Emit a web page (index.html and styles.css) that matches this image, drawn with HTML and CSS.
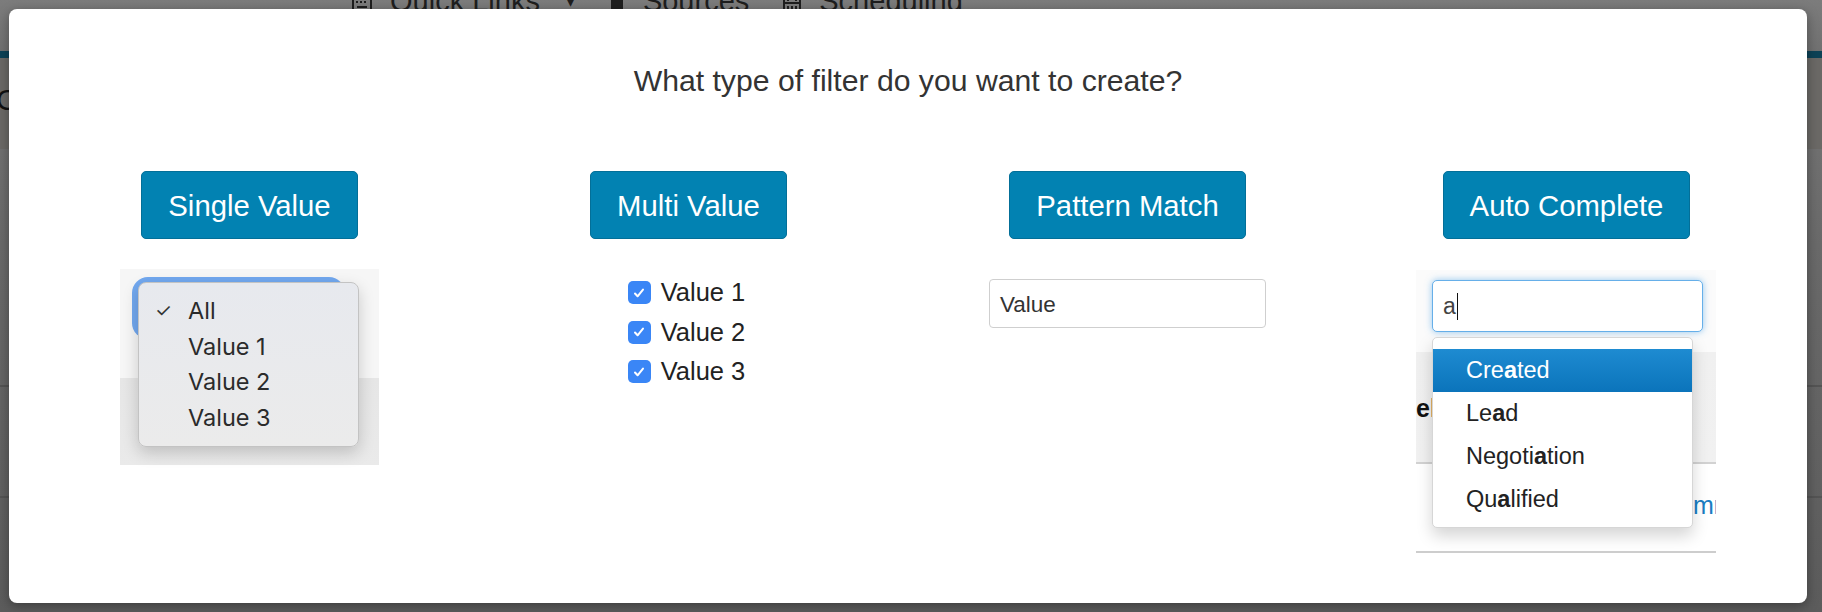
FILE: index.html
```html
<!DOCTYPE html>
<html>
<head>
<meta charset="utf-8">
<title>Filter type</title>
<link rel="stylesheet" href="styles.css">
</head>
<body>
<div class="page">
  <nav class="topnav">
    <span class="nav-item"><svg class="nav-ico" width="20" height="16" viewBox="0 0 20 16"><rect x="1" y="2" width="18" height="12" rx="1" fill="none" stroke="#1e1e1e" stroke-width="2"/><rect x="4" y="5" width="2" height="2" fill="#1e1e1e"/><rect x="8" y="5" width="2" height="2" fill="#1e1e1e"/><rect x="12" y="5" width="2" height="2" fill="#1e1e1e"/><rect x="5" y="10" width="10" height="2" fill="#1e1e1e"/></svg>Quick Links <span class="caret">▾</span></span>
    <span class="nav-item"><svg class="nav-ico" width="16" height="18" viewBox="0 0 16 18"><path d="M2 1h12v16l-6-4-6 4z" fill="#1e1e1e"/></svg>Sources</span>
    <span class="nav-item"><svg class="nav-ico" width="18" height="18" viewBox="0 0 18 18"><rect x="1" y="3" width="16" height="14" fill="none" stroke="#1e1e1e" stroke-width="2"/><path d="M1 7h16M5 1v4M13 1v4M5 10v5M9 10v5M13 10v5" stroke="#1e1e1e" stroke-width="2"/></svg>Scheduling</span>
  </nav>
  <div class="teal-bar"></div>
  <div class="subhead"><span class="sub-letter">C</span></div>
  <div class="page-body">
    <div class="rule rule-a"></div>
    <div class="rule rule-b"></div>
  </div>
</div>

<div class="modal">
  <h2 class="modal-title">What type of filter do you want to create?</h2>
  <div class="options">
    <div class="option">
      <button class="btn">Single Value</button>
      <div class="native-shot">
        <div class="native-select"></div>
        <ul class="native-menu">
          <li><span class="tick">✓</span>All</li>
          <li>Value 1</li>
          <li>Value 2</li>
          <li>Value 3</li>
        </ul>
      </div>
    </div>
    <div class="option">
      <button class="btn">Multi Value</button>
      <ul class="checklist">
        <li><span class="cb"><svg width="14" height="14" viewBox="0 0 14 14"><path d="M3 7.5l2.6 2.8L11 3.6" fill="none" stroke="#fff" stroke-width="2" stroke-linecap="round" stroke-linejoin="round"/></svg></span>Value 1</li>
        <li><span class="cb"><svg width="14" height="14" viewBox="0 0 14 14"><path d="M3 7.5l2.6 2.8L11 3.6" fill="none" stroke="#fff" stroke-width="2" stroke-linecap="round" stroke-linejoin="round"/></svg></span>Value 2</li>
        <li><span class="cb"><svg width="14" height="14" viewBox="0 0 14 14"><path d="M3 7.5l2.6 2.8L11 3.6" fill="none" stroke="#fff" stroke-width="2" stroke-linecap="round" stroke-linejoin="round"/></svg></span>Value 3</li>
      </ul>
    </div>
    <div class="option">
      <button class="btn">Pattern Match</button>
      <div class="text-input">Value</div>
    </div>
    <div class="option">
      <button class="btn">Auto Complete</button>
      <div class="ac-shot">
        <div class="ac-band"><span class="ac-bg-bold">el</span></div>
        <div class="ac-white"><span class="ac-bg-link">mr</span></div>
        <div class="ac-input">a<span class="text-caret"></span></div>
        <ul class="ac-menu">
          <li class="active">Cre<b>a</b>ted</li>
          <li>Le<b>a</b>d</li>
          <li>Negoti<b>a</b>tion</li>
          <li>Qu<b>a</b>lified</li>
        </ul>
      </div>
    </div>
  </div>
</div>
</body>
</html>
```

FILE: styles.css
```css
html, body {
  margin: 0;
  padding: 0;
}
body {
  width: 1822px;
  height: 612px;
  overflow: hidden;
  position: relative;
  font-family: "Liberation Sans", Arial, sans-serif;
  background: linear-gradient(180deg, #7a7a7a 0%, #6a6a6a 40%, #5c5c5c 100%);
}

/* page behind the overlay */
.page {
  height: 612px;
}
.topnav {
  height: 51px;
  display: flex;
  gap: 34px;
  padding-left: 352px;
  font-size: 29px;
  line-height: 14px;
  color: #1e1e1e;
  background: linear-gradient(180deg, #7c7c7c, #717171);
}
.nav-item {
  display: flex;
  align-items: flex-start;
  gap: 18px;
  height: 14px;
  margin-top: -6px;
  white-space: nowrap;
}
.nav-ico {
  margin-top: 2px;
}
.caret {
  font-size: 18px;
  margin-left: 8px;
}
.teal-bar {
  height: 7px;
  background: #0d4256;
}
.subhead {
  height: 91px;
  background: #6b6966;
  position: relative;
}
.sub-letter {
  display: block;
  font-size: 30px;
  line-height: 30px;
  padding-top: 27px;
  margin-left: -4px;
  color: #111;
}
.page-body {
  height: 463px;
  display: flex;
  flex-direction: column;
}
.rule {
  height: 2px;
  background: #545454;
}
.rule-a {
  margin-top: 236px;
}
.rule-b {
  margin-top: 109px;
}

/* modal */
.modal {
  position: absolute;
  top: 9px;
  left: 9px;
  width: 1798px;
  height: 594px;
  background: #fff;
  border-radius: 8px;
  box-shadow: 0 3px 12px rgba(0, 0, 0, 0.35);
}
.modal-title {
  margin: 0;
  padding-top: 54px;
  height: 36px;
  line-height: 36px;
  text-align: center;
  font-size: 30.2px;
  font-weight: normal;
  color: #333;
}
.options {
  display: grid;
  grid-template-columns: repeat(4, 1fr);
  padding: 72px 21px 0;
}
.option {
  display: flex;
  flex-direction: column;
  align-items: center;
}
.btn {
  height: 68px;
  padding: 0 26px;
  border: 1px solid #036f98;
  border-radius: 5px;
  background: #0282b2;
  color: #fff;
  font-family: "Liberation Sans", Arial, sans-serif;
  font-size: 29.3px;
  line-height: 68px;
}

/* native select screenshot */
.native-shot {
  position: relative;
  margin-top: 30px;
  width: 259px;
  height: 196px;
  background: linear-gradient(180deg, #f6f6f6 0, #f6f6f6 109px, #e6e6e6 109px, #eaeaea 100%);
}
.native-select {
  position: absolute;
  left: 12px;
  top: 8px;
  width: 213px;
  height: 62px;
  border-radius: 16px;
  background: #72a8ef;
}
.native-menu {
  position: absolute;
  left: 18px;
  top: 13px;
  width: 219px;
  height: 153px;
  margin: 0;
  padding: 10px 0 0;
  list-style: none;
  background: linear-gradient(180deg, #e7e9ee, #ebebeb);
  border: 1px solid #c3c3c3;
  border-radius: 8px;
  box-shadow: 0 6px 16px rgba(0, 0, 0, 0.18);
  font-family: Inter, "Liberation Sans", sans-serif;
  font-size: 23.5px;
  color: #2b2b2b;
}
.native-menu li {
  position: relative;
  height: 35.5px;
  line-height: 35.5px;
  padding-left: 49px;
}
.tick {
  position: absolute;
  left: 16px;
  font-size: 19px;
  color: #333;
}

/* checkboxes */
.checklist {
  list-style: none;
  margin: 34px 0 0;
  padding: 0;
  font-size: 25.5px;
  color: #222;
}
.checklist li {
  display: flex;
  align-items: center;
  gap: 10px;
  height: 39.5px;
  padding-right: 4px;
}
.cb {
  width: 23px;
  height: 23px;
  border-radius: 5px;
  background: #3a86f6;
  display: flex;
  align-items: center;
  justify-content: center;
}

/* pattern input */
.text-input {
  margin-top: 40px;
  width: 265px;
  height: 47px;
  padding-left: 10px;
  border: 1px solid #cfcfcf;
  border-radius: 4px;
  font-size: 22.5px;
  line-height: 49px;
  color: #333;
}

/* autocomplete screenshot */
.ac-shot {
  position: relative;
  margin-top: 31px;
  margin-left: -1px;
  width: 300px;
  height: 292px;
  overflow: hidden;
  background: #fff;
}
.ac-band {
  position: absolute;
  left: 0;
  top: 0;
  width: 300px;
  height: 192px;
  background: linear-gradient(180deg, #fbfbfb 0, #fbfbfb 82px, #f0f0f0 82px, #f1f1f1 100%);
  border-bottom: 2px solid #d2d2d2;
}
.ac-bg-bold {
  position: absolute;
  left: 0;
  top: 124px;
  font-size: 25px;
  font-weight: bold;
  color: #111;
}
.ac-white {
  position: absolute;
  left: 0;
  top: 194px;
  width: 300px;
  height: 87px;
  border-bottom: 2px solid #cdcdcd;
}
.ac-bg-link {
  position: absolute;
  left: 277px;
  top: 27px;
  font-size: 25px;
  color: #1a7dc2;
}
.ac-input {
  position: absolute;
  left: 16px;
  top: 10px;
  width: 259px;
  height: 50px;
  padding-left: 10px;
  border: 1px solid #66afe9;
  border-radius: 5px;
  background: #fff;
  box-shadow: 0 0 7px rgba(102, 175, 233, 0.7);
  font-size: 23px;
  line-height: 50px;
  color: #444;
}
.text-caret {
  display: inline-block;
  width: 1px;
  height: 27px;
  margin-left: 1px;
  vertical-align: -6px;
  background: #111;
}
.ac-menu {
  position: absolute;
  left: 16px;
  top: 67px;
  width: 259px;
  height: 178px;
  margin: 0;
  padding: 11px 0 0;
  list-style: none;
  background: #fff;
  border: 1px solid #d6d6d6;
  border-radius: 5px;
  box-shadow: 0 8px 16px rgba(0, 0, 0, 0.17);
  font-size: 23.5px;
  color: #222;
}
.ac-menu li {
  height: 43px;
  line-height: 43px;
  padding-left: 33px;
}
.ac-menu li.active {
  background: linear-gradient(180deg, #1e8bd1, #0b74bb);
  color: #fff;
}
.ac-menu b {
  font-weight: bold;
}
```
